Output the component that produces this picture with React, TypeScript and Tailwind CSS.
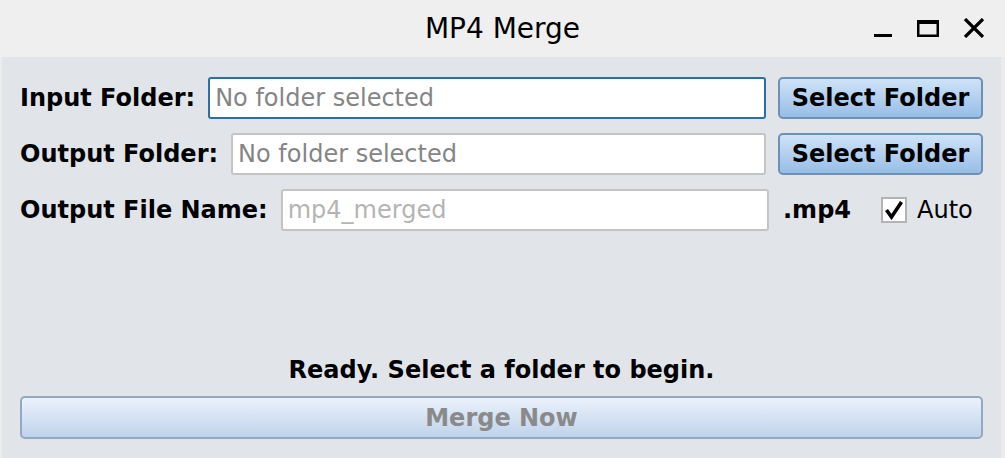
import { useState } from 'react'

function TitleBar() {
  return (
    <div className="relative flex h-[57px] items-center justify-center bg-[#efefef]">
      <span className="text-[28px] leading-none text-black">MP4 Merge</span>
      <div className="absolute right-[20px] top-[18px] flex items-center gap-[24px]">
        <svg width="20" height="20" viewBox="0 0 20 20">
          <rect x="1" y="16" width="18" height="3" fill="#000" />
        </svg>
        <svg width="22" height="18" viewBox="0 0 22 18">
          <rect x="1.25" y="2.25" width="19.5" height="14.5" fill="none" stroke="#000" strokeWidth="2.5" />
          <rect x="1" y="1" width="20" height="4" fill="#000" />
        </svg>
        <svg width="22" height="20" viewBox="0 0 22 20">
          <path d="M2 1 L20 19 M20 1 L2 19" stroke="#000" strokeWidth="3.2" strokeLinecap="butt" />
        </svg>
      </div>
    </div>
  )
}

function Field({ placeholder, focused, light }: { placeholder: string; focused?: boolean; light?: boolean }) {
  return (
    <input
      readOnly
      placeholder={placeholder}
      className={`h-[42px] min-w-0 flex-1 rounded-[3px] bg-white px-[5px] text-[24px] outline-none ${
        focused ? 'border-2 border-[#2f6ea5]' : 'border-2 border-[#c4c4c4]'
      } ${light ? 'placeholder:text-[#b4b4b4]' : 'placeholder:text-[#858585]'}`}
    />
  )
}

function BlueButton({ children }: { children: React.ReactNode }) {
  return (
    <button className="h-[42px] w-[205px] rounded-[5px] border-2 border-[#6e8fb6] bg-gradient-to-b from-[#cfe3f8] to-[#97bde6] text-[24px] font-bold text-black">
      {children}
    </button>
  )
}

export default function App() {
  const [auto, setAuto] = useState(true)

  return (
    <div
      className="flex h-[458px] w-[1005px] flex-col bg-[#ececec]"
      style={{ fontFamily: '"DejaVu Sans", sans-serif' }}
    >
      <TitleBar />
      <div className="ml-[2px] mr-[4px] flex flex-1 flex-col bg-[#e1e4e9] px-[18px] pb-[19px] pt-[20px]">
        <div className="flex flex-col gap-[14px]">
          <div className="flex items-center">
            <span className="mr-[13px] text-[24px] font-bold text-black">Input Folder:</span>
            <Field placeholder="No folder selected" focused />
            <div className="ml-[12px]">
              <BlueButton>Select Folder</BlueButton>
            </div>
          </div>
          <div className="flex items-center">
            <span className="mr-[13px] text-[24px] font-bold text-black">Output Folder:</span>
            <Field placeholder="No folder selected" />
            <div className="ml-[12px]">
              <BlueButton>Select Folder</BlueButton>
            </div>
          </div>
          <div className="flex items-center">
            <span className="mr-[13px] text-[24px] font-bold text-black">Output File Name:</span>
            <Field placeholder="mp4_merged" light />
            <div className="ml-[14px] flex w-[200px] items-center">
              <span className="text-[24px] font-bold text-black">.mp4</span>
              <button
                onClick={() => setAuto(!auto)}
                className="ml-[30px] flex h-[26px] w-[26px] items-center justify-center border-2 border-[#b3b3b3] bg-white"
              >
                {auto && (
                  <svg width="20" height="20" viewBox="0 0 20 20">
                    <path d="M2.5 10 L7.5 17 L17.5 2" fill="none" stroke="#000" strokeWidth="3.6" />
                  </svg>
                )}
              </button>
              <span className="ml-[10px] text-[24px] text-black">Auto</span>
            </div>
          </div>
        </div>
        <div className="flex-1" />
        <div className="mb-[12px] text-center text-[24px] font-bold leading-[28px] text-black">
          Ready. Select a folder to begin.
        </div>
        <button
          disabled
          className="h-[43px] w-full rounded-[5px] border-2 border-[#94a8c4] bg-gradient-to-b from-[#ebf2fc] to-[#c0d3ea] text-[24px] font-bold text-[#8a8a8a]"
        >
          Merge Now
        </button>
      </div>
    </div>
  )
}
